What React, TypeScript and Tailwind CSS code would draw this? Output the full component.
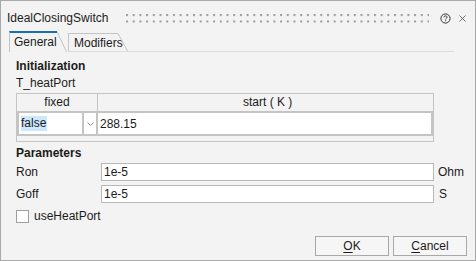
import { X } from "lucide-react";

function Grip() {
  return (
    <svg width="303" height="9" className="block">
      <defs>
        <pattern id="grip" width="6.7" height="6.5" patternUnits="userSpaceOnUse">
          <rect x="0" y="0" width="2" height="2" fill="#9a9a9a" />
        </pattern>
      </defs>
      <rect width="303" height="9" fill="url(#grip)" />
    </svg>
  );
}

function HelpIcon() {
  return (
    <svg width="11" height="11" viewBox="0 0 11 11" className="block">
      <circle cx="5.5" cy="5.5" r="4.6" fill="none" stroke="#333" strokeWidth="1" />
      <path d="M3.9 4.4 C3.9 3.4 4.6 2.9 5.5 2.9 C6.4 2.9 7.1 3.4 7.1 4.2 C7.1 5.2 5.6 5.3 5.6 6.4" fill="none" stroke="#333" strokeWidth="1" />
      <rect x="5.1" y="7.3" width="1" height="1" fill="#333" />
    </svg>
  );
}

function TabSlant({ h }: { h: number }) {
  return (
    <svg width="10" height={h} className="block">
      <line x1="0" y1="0.5" x2="9.5" y2={h} stroke="#c4c4c4" strokeWidth="1" />
    </svg>
  );
}

export default function App() {
  return (
    <div className="w-[476px] h-[261px] bg-[#f3f3f3] border border-[#a9a9a9] font-['Liberation_Sans',Arial,sans-serif] text-[12px] text-[#1b1b1b] flex flex-col">
      {/* title bar */}
      <div className="h-[30px] pt-[4px] pl-[6px] flex items-center">
        <span className="w-[103px] leading-[14px]">IdealClosingSwitch</span>
        <div className="ml-[16px] pt-[1px]">
          <Grip />
        </div>
        <div className="ml-[11px]">
          <HelpIcon />
        </div>
        <X className="ml-[6px] w-[11px] h-[11px] text-[#333]" strokeWidth={1.5} />
      </div>

      {/* tabs */}
      <div className="h-[21px] pl-[8px] flex items-end">
        <div className="flex h-[21px]">
          <div className="w-[48px] border-l border-[#c4c4c4] border-t-2 border-t-[#1c6fb3] pl-[4px] pt-[2px] leading-[14px]">
            General
          </div>
          <TabSlant h={21} />
        </div>
        <div className="flex h-[19px] ml-[1px] border-b border-[#dcdcdc]">
          <div className="w-[50px] border-l border-t border-[#c4c4c4] pl-[5px] pt-[2px] leading-[14px]">
            Modifiers
          </div>
          <TabSlant h={18} />
        </div>
        <div className="w-[326px] h-[21px] border-b border-[#dcdcdc]" />
      </div>

      {/* content */}
      <div className="flex-1 flex flex-col pl-[15px] pr-[7px]">
        <div className="mt-[7px] leading-[14px] font-bold">Initialization</div>
        <div className="mt-[3px] leading-[14px]">T_heatPort</div>

        <div className="mt-[3px] w-[418px] h-[49px] border border-[#c4c4c4] flex flex-col">
          <div className="h-[17px] flex leading-[17px]">
            <div className="w-[81px] border-r border-[#c4c4c4] text-center">fixed</div>
            <div className="flex-1 pl-[145px]">start ( K )</div>
          </div>
          <div className="h-[25px] w-[416px] border-2 border-[#c4c4c4] bg-white flex items-center">
            <div className="w-[63px] h-full flex items-center pl-[2px]">
              <span className="bg-[#cce8ff] leading-[15px] pr-[1px]">false</span>
            </div>
            <div className="w-[16px] h-full border-l-2 border-r-2 border-[#c4c4c4] flex items-center justify-center">
              <svg width="7" height="4" viewBox="0 0 7 4">
                <path d="M0.5 0.5 L3.5 3.5 L6.5 0.5" fill="none" stroke="#8a8a8a" strokeWidth="1" />
              </svg>
            </div>
            <div className="flex-1 pl-[2px] leading-[14px]">288.15</div>
          </div>
        </div>

        <div className="mt-[4px] leading-[14px] font-bold">Parameters</div>

        <div className="mt-[3px] flex flex-col gap-[4px]">
          <div className="flex items-center h-[18px]">
            <span className="w-[85px]">Ron</span>
            <div className="w-[333px] h-[18px] bg-white border border-[#b9b9b9] pl-[2px] leading-[16px]">1e-5</div>
            <span className="ml-[4px]">Ohm</span>
          </div>
          <div className="flex items-center h-[18px]">
            <span className="w-[85px]">Goff</span>
            <div className="w-[333px] h-[18px] bg-white border border-[#b9b9b9] pl-[2px] leading-[16px]">1e-5</div>
            <span className="ml-[5px]">S</span>
          </div>
        </div>

        <div className="mt-[6px] flex items-center">
          <div className="w-[13px] h-[13px] bg-white border border-[#9f9f9f]" />
          <span className="ml-[5px] leading-[14px]">useHeatPort</span>
        </div>

        <div className="mt-[13px] flex justify-end gap-[4px] pr-[1px]">
          <button className="w-[74px] h-[20px] bg-[#f6f6f6] border border-[#a8a8a8] leading-[18px]">
            <span className="underline underline-offset-2">O</span>K
          </button>
          <button className="w-[74px] h-[20px] bg-[#f6f6f6] border border-[#a8a8a8] leading-[18px]">
            <span className="underline underline-offset-2">C</span>ancel
          </button>
        </div>
      </div>
    </div>
  );
}
